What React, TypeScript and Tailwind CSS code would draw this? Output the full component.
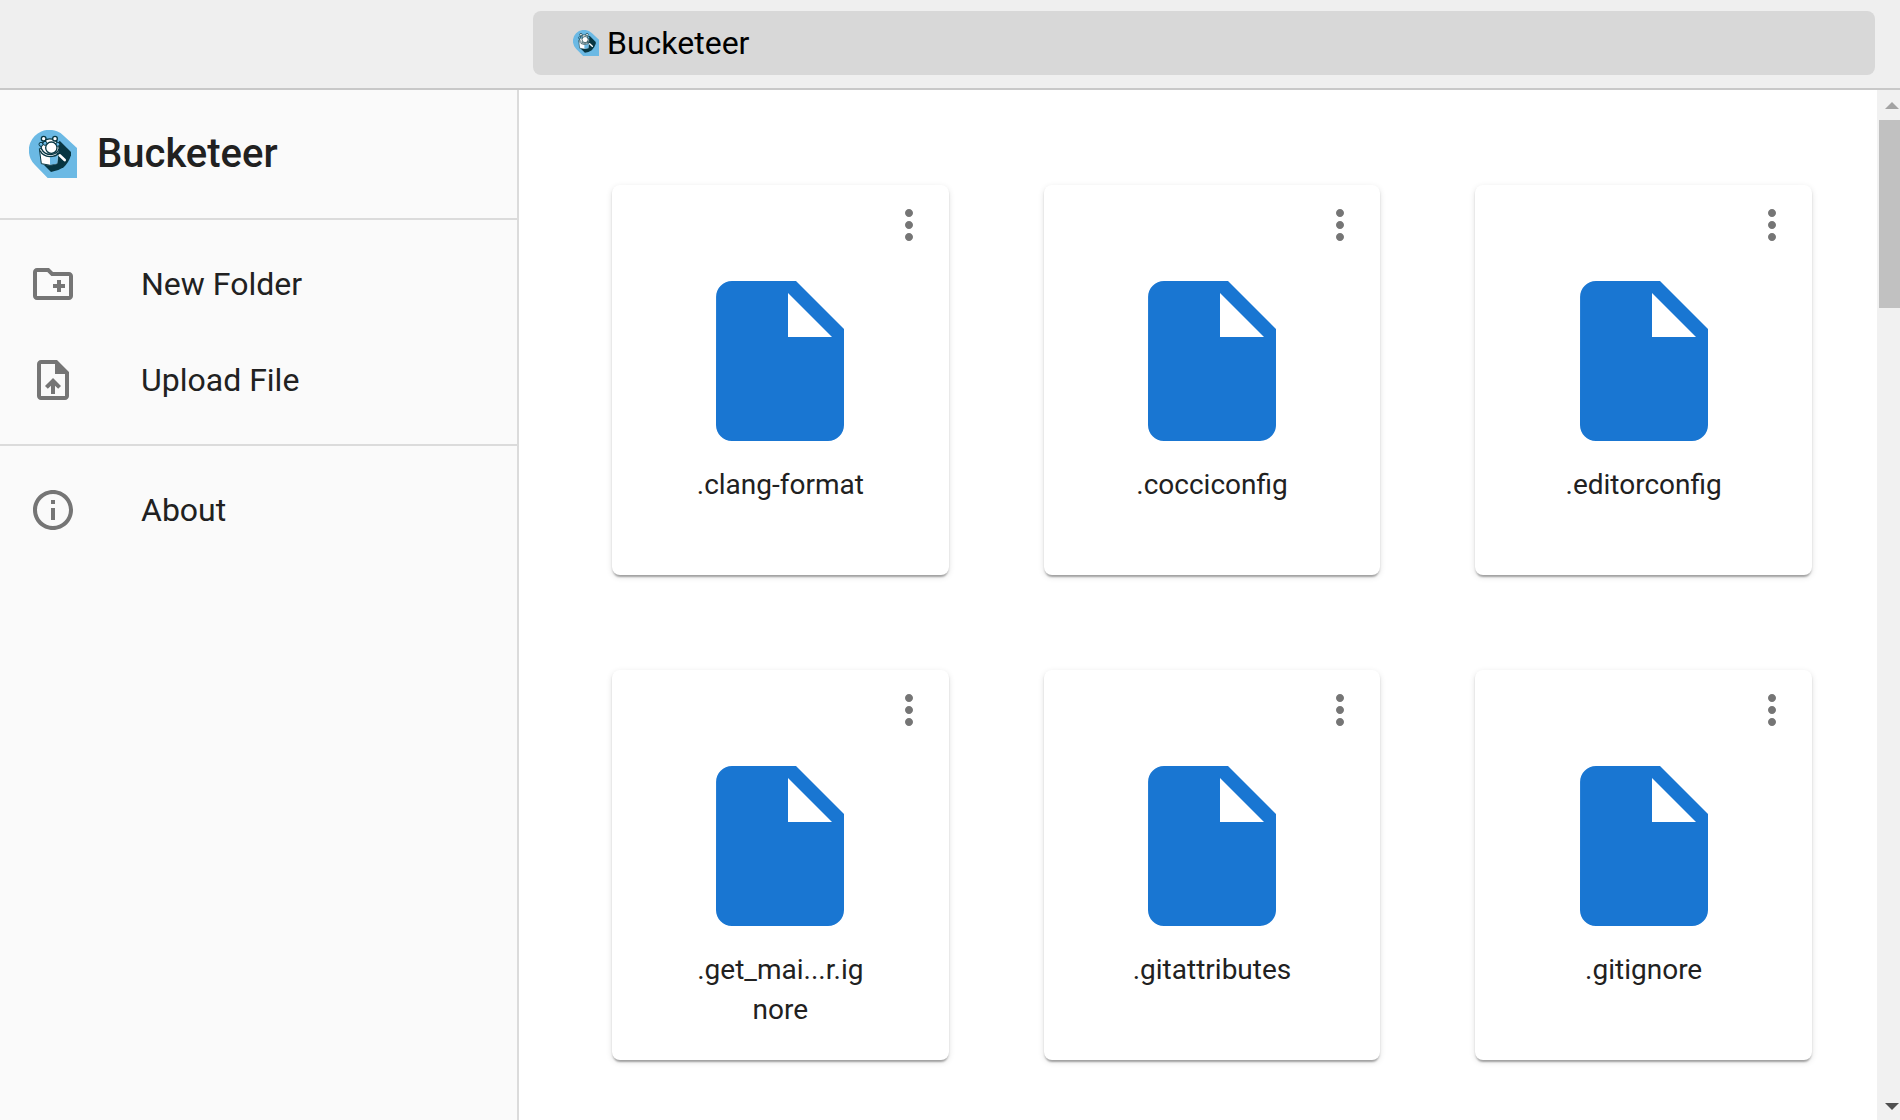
import React from 'react';

const files = [
  '.clang-format',
  '.cocciconfig',
  '.editorconfig',
  '.get_mai...r.ignore',
  '.gitattributes',
  '.gitignore',
];

function Logo({ className }: { className: string }) {
  return (
    <svg viewBox="0 0 144 144" className={className} aria-hidden="true">
      <path d="M56 144 L18 105 A61 61 0 1 1 104 17 L144 54 V144 Z" fill="#6bb9e4" />
      <path d="M92 32 L126 66 V76 Q119 98 104 112 Q86 124 66 126 L42 102 Z" fill="#073642" />
      <path d="M31 56 L37 101 Q62 110 86 101 L90 60 Z" fill="#fff" stroke="#073642" strokeWidth="3" />
      <path d="M63 82 Q76 81 87 73 L85 100 Q76 104 63 104 Z" fill="#6bb9e4" />
      <path d="M33 62 Q42 79 62 80 Q80 80 90 70" fill="none" stroke="#073642" strokeWidth="4" />
      <g fill="#fff" stroke="#073642" strokeWidth="4">
        <path d="M37 56 Q34 42 46 32 Q60 22 76 30 Q92 38 90 56 Q86 72 66 74 Q46 74 37 56 Z" />
        <circle cx="44" cy="26" r="7" />
        <circle cx="78" cy="26" r="7" />
        <circle cx="36" cy="43" r="6" fill="#6bb9e4" strokeWidth="3" />
        <circle cx="48" cy="40" r="6" fill="#6bb9e4" strokeWidth="3" />
        <circle cx="86" cy="43" r="6" fill="#6bb9e4" strokeWidth="3" />
        <circle cx="67" cy="53" r="17" />
      </g>
      <path d="M80 65 L92 76" stroke="#073642" strokeWidth="4" />
      <path d="M92 76 L107 90" stroke="#fff" strokeWidth="8" strokeLinecap="round" />
    </svg>
  );
}

function Icon({ d, className }: { d: string; className: string }) {
  return (
    <svg viewBox="0 0 24 24" fill="currentColor" className={className} aria-hidden="true">
      <path d={d} />
    </svg>
  );
}

const newFolder =
  'M20 6h-8l-2-2H4c-1.11 0-1.99.89-1.99 2L2 18c0 1.11.89 2 2 2h16c1.11 0 2-.89 2-2V8c0-1.11-.89-2-2-2zm0 12H4V6h5.17l2 2H20v10zm-8-4h2v2h2v-2h2v-2h-2v-2h-2v2h-2z';
const uploadFile =
  'M14 2H6c-1.1 0-1.99.9-1.99 2L4 20c0 1.1.89 2 1.99 2H18c1.1 0 2-.9 2-2V8l-6-6zm4 18H6V4h7v5h5v11zM8 15.01l1.41 1.41L11 14.84V19h2v-4.16l1.59 1.59L16 15.01 12.01 11z';
const about =
  'M11 7h2v2h-2zm0 4h2v6h-2zm1-9C6.48 2 2 6.48 2 12s4.48 10 10 10 10-4.48 10-10S17.52 2 12 2zm0 18c-4.41 0-8-3.59-8-8s3.59-8 8-8 8 3.59 8 8-3.59 8-8 8z';
const more =
  'M12 8c1.1 0 2-.9 2-2s-.9-2-2-2-2 .9-2 2 .9 2 2 2zm0 2c-1.1 0-2 .9-2 2s.9 2 2 2 2-.9 2-2-.9-2-2-2zm0 6c-1.1 0-2 .9-2 2s.9 2 2 2 2-.9 2-2-.9-2-2-2z';
const file =
  'M6 2c-1.1 0-1.99.9-1.99 2L4 20c0 1.1.89 2 1.99 2H18c1.1 0 2-.9 2-2V8l-6-6H6zm7 7V3.5L18.5 9H13z';

function MenuItem({ icon, label }: { icon: string; label: string }) {
  return (
    <li>
      <button type="button" className="flex h-24 w-full items-center gap-16 pl-[29px] text-left">
        <Icon d={icon} className="size-12 text-[#757575]" />
        <span className="text-[32px] leading-12">{label}</span>
      </button>
    </li>
  );
}

function FileCard({ name }: { name: string }) {
  return (
    <article className="flex h-[390px] flex-col items-center rounded-lg bg-white pt-4 shadow-[0_4px_2px_-2px_rgba(0,0,0,0.2),0_2px_2px_rgba(0,0,0,0.14),0_2px_6px_rgba(0,0,0,0.12)]">
      <button type="button" aria-label={`Options for ${name}`} className="mr-4 self-end text-[#757575]">
        <Icon d={more} className="size-12" />
      </button>
      <Icon d={file} className="mt-4 size-48 text-[#1976d2]" />
      <p className="mt-2 w-44 text-center text-[28px] leading-10 break-all">{name}</p>
    </article>
  );
}

function ScrollBar() {
  return (
    <div className="flex w-[23px] shrink-0 flex-col items-end bg-[#f1f1f1]" aria-hidden="true">
      <svg viewBox="0 0 23 30" className="h-[30px] w-full">
        <path d="M8 19 L15 12 L22 19 Z" fill="#a3a3a3" />
      </svg>
      <div className="h-[188px] w-[21px] bg-[#c1c1c1]" />
      <svg viewBox="0 0 23 30" className="mt-auto h-[30px] w-full">
        <path d="M8 13 H22 L15 20 Z" fill="#505050" />
      </svg>
    </div>
  );
}

export default function App() {
  return (
    <div className="flex h-screen flex-col overflow-hidden bg-white font-['Roboto',sans-serif] text-[#212121]">
      <header className="flex h-[90px] shrink-0 border-b-2 border-[#c8c8c8] bg-[#efefef] pt-[11px] pr-[25px] pl-[533px]">
        <div className="flex h-16 flex-1 items-center gap-2 rounded-lg bg-[#d8d8d8] pl-10 text-black">
          <Logo className="size-[26px]" />
          <span className="text-[32px] leading-10">Bucketeer</span>
        </div>
      </header>
      <div className="flex min-h-0 flex-1">
        <aside className="w-[519px] shrink-0 border-r-2 border-[#dbdbdb] bg-[#fafafa]">
          <div className="flex h-[130px] items-center gap-5 border-b-2 border-[#dbdbdb] pl-[29px]">
            <Logo className="size-12" />
            <h1 className="text-[40px] leading-16 font-medium">Bucketeer</h1>
          </div>
          <nav>
            <ul className="border-b-2 border-[#dbdbdb] py-4">
              <MenuItem icon={newFolder} label="New Folder" />
              <MenuItem icon={uploadFile} label="Upload File" />
            </ul>
            <ul className="py-4">
              <MenuItem icon={about} label="About" />
            </ul>
          </nav>
        </aside>
        <main className="grid flex-1 grid-cols-3 content-start gap-[95px] overflow-hidden pt-[95px] pr-[65px] pl-[93px]">
          {files.map((name) => (
            <FileCard key={name} name={name} />
          ))}
        </main>
        <ScrollBar />
      </div>
    </div>
  );
}
